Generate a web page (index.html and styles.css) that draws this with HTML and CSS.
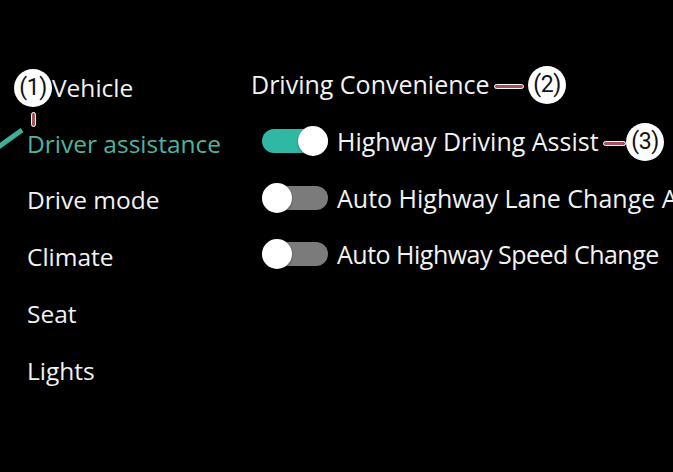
FILE: index.html
```html
<!DOCTYPE html>
<html>
<head>
<meta charset="utf-8">
<link rel="stylesheet" href="styles.css">
</head>
<body>
<div class="screen">
  <nav class="sidebar">
    <div class="nav-item header">Vehicle</div>
    <div class="nav-item active">Driver assistance</div>
    <div class="nav-item">Drive mode</div>
    <div class="nav-item">Climate</div>
    <div class="nav-item">Seat</div>
    <div class="nav-item">Lights</div>
  </nav>
  <main class="content">
    <div class="section-title"><span class="label">Driving Convenience</span></div>
    <div class="row">
      <span class="toggle on"><span class="thumb"></span></span>
      <span class="label">Highway Driving Assist</span>
    </div>
    <div class="row">
      <span class="toggle"><span class="thumb"></span></span>
      <span class="label">Auto Highway Lane Change Assist</span>
    </div>
    <div class="row">
      <span class="toggle"><span class="thumb"></span></span>
      <span class="label tight">Auto Highway Speed Change</span>
    </div>
  </main>

  <svg class="check" width="30" height="30" viewBox="0 0 30 30"><path d="M-3 24 L22 6" stroke="#3fae9a" stroke-width="5" fill="none"/></svg>

  <div class="callout c1">(1)</div>
  <div class="connector v c1-line"></div>
  <div class="callout c2">(2)</div>
  <div class="connector h c2-line"></div>
  <div class="callout c3">(3)</div>
  <div class="connector h c3-line"></div>
</div>
</body>
</html>
```
FILE: styles.css
```css
html, body {
  margin: 0;
  padding: 0;
  background: #000;
}
.screen {
  position: relative;
  width: 673px;
  height: 472px;
  overflow: hidden;
  background: #000;
  display: flex;
  font-family: "Open Sans", "Noto Sans", sans-serif;
  color: #f2f2f2;
}
.sidebar {
  width: 224px;
  flex: none;
  padding: 58px 0 0 27px;
  display: flex;
  flex-direction: column;
}
.nav-item {
  height: 57px;
  line-height: 57px;
  font-size: 24.5px;
  white-space: nowrap;
}
.nav-item.header {
  height: 58px;
  line-height: 60px;
  padding-left: 25px;
}
.nav-item.active {
  color: #4fb3a0;
  height: 55px;
  line-height: 55px;
}
.content {
  flex: 1;
  min-width: 0;
  padding-top: 56px;
  display: flex;
  flex-direction: column;
  white-space: nowrap;
}
.section-title {
  height: 57px;
  line-height: 57px;
  font-size: 25px;
}
.row {
  height: 56.5px;
  display: flex;
  align-items: center;
  gap: 9px;
  font-size: 25px;
  padding-left: 11px;
}
.label.tight {
  letter-spacing: -0.5px;
}
.toggle {
  position: relative;
  width: 66px;
  height: 24px;
  border-radius: 12px;
  background: #7b7b7b;
  flex: none;
}
.toggle.on {
  background: #2fb8a3;
}
.thumb {
  position: absolute;
  top: -3px;
  left: 0;
  width: 30px;
  height: 30px;
  border-radius: 50%;
  background: #fff;
  box-shadow: 0 1px 2px rgba(0,0,0,0.4);
}
.toggle.on .thumb {
  left: 36px;
}
.check {
  position: absolute;
  left: 0;
  top: 124px;
}
.callout {
  position: absolute;
  width: 38px;
  height: 38px;
  border-radius: 50%;
  background: #fff;
  color: #111;
  font-size: 23px;
  line-height: 38px;
  text-align: center;
  font-family: Roboto, sans-serif;
  letter-spacing: -0.5px;
}
.c1 { left: 14px; top: 69px; }
.c2 { left: 528px; top: 66px; }
.c3 { left: 626px; top: 123px; }
.connector {
  position: absolute;
  background: #a8505a;
  border: 1px solid #fff;
  border-radius: 3px;
}
.connector.h { height: 3px; }
.connector.v { width: 3px; }
.c1-line { left: 31px; top: 112px; height: 13px; }
.c2-line { left: 494px; top: 84px; width: 28px; }
.c3-line { left: 603px; top: 141px; width: 21px; }
```
